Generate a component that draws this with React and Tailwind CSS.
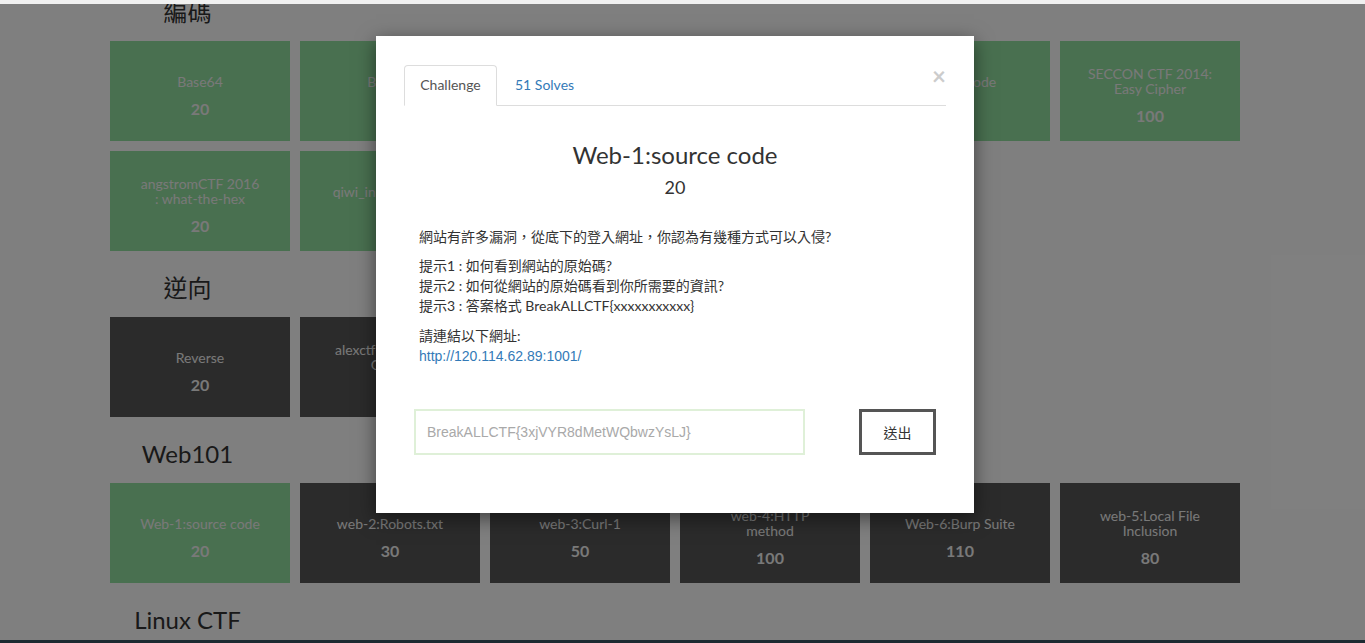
import React from "react";

const sections = [
  {
    title: "編碼",
    rows: [
      [
        { lines: ["Base64"], points: 20, solved: true },
        { lines: ["Base32"], points: 20, solved: true },
        { lines: ["URL Encode"], points: 20, solved: true },
        { lines: ["Caesar Cipher"], points: 30, solved: true },
        { lines: ["Morse code"], points: 20, solved: true },
        { lines: ["SECCON CTF 2014:", "Easy Cipher"], points: 100, solved: true },
      ],
      [
        { lines: ["angstromCTF 2016", ": what-the-hex"], points: 20, solved: true },
        { lines: ["qiwi_infosec_2016"], points: 20, solved: true },
      ],
    ],
  },
  {
    title: "逆向",
    rows: [
      [
        { lines: ["Reverse"], points: 20 },
        { lines: ["alexctf-2017 RE1:", "Gifted"], points: 50 },
      ],
    ],
  },
  {
    title: "Web101",
    rows: [
      [
        { lines: ["Web-1:source code"], points: 20, solved: true },
        { lines: ["web-2:Robots.txt"], points: 30 },
        { lines: ["web-3:Curl-1"], points: 50 },
        { lines: ["web-4:HTTP", "method"], points: 100 },
        { lines: ["Web-6:Burp Suite"], points: 110 },
        { lines: ["web-5:Local File", "Inclusion"], points: 80 },
      ],
    ],
  },
  { title: "Linux CTF", rows: [] },
];

function ChallengeCard({ card }) {
  return (
    <div
      className={`w-[180px] h-[100px] flex flex-col items-center justify-center pt-[10px] text-[#f2f2f2] text-center ${
        card.solved ? "bg-[#92e0a0]" : "bg-[#565656]"
      }`}
    >
      <div className="text-[14px] leading-[15px]">
        {card.lines.map((line) => (
          <div key={line}>{line}</div>
        ))}
      </div>
      <div className="mt-[10px] text-[16px] leading-[20px] font-bold">{card.points}</div>
    </div>
  );
}

export default function App() {
  return (
    <div
      className="relative w-[1365px] h-[643px] overflow-hidden bg-white text-[#333]"
      style={{ fontFamily: 'Lato, "Noto Sans CJK TC", sans-serif' }}
    >
      <div className="pl-[110px] -mt-[25px]">
        {sections.map((section) => (
          <div key={section.title}>
            <h3 className="w-[155px] mt-[24px] mb-[16px] h-[26px] text-center text-[24px] leading-[26px] text-[#333]">
              {section.title}
            </h3>
            <div className="flex flex-col gap-[10px]">
              {section.rows.map((row, i) => (
                <div key={i} className="flex gap-[10px]">
                  {row.map((card) => (
                    <ChallengeCard key={card.lines.join(" ")} card={card} />
                  ))}
                </div>
              ))}
            </div>
          </div>
        ))}
      </div>

      {/* backdrop */}
      <div className="absolute inset-0 bg-black/50" />
      <div className="absolute top-0 left-0 right-0 h-[4px] bg-[#f0f0f0]" />
      <div className="absolute bottom-0 left-0 right-0 h-[3px] bg-[#1c2a31]" />

      {/* modal */}
      <div className="absolute left-[376px] top-[36px] w-[598px] h-[477px] bg-white shadow-[0_5px_18px_rgba(0,0,0,0.5)] pt-[29px] px-[28px]">
        <button className="absolute right-[28px] top-[28px] text-[24px] leading-none font-bold text-[#cccccc]">
          ×
        </button>

        <div className="flex h-[41px] border-b border-[#dddddd] text-[14px]">
          <div className="w-[93px] h-[41px] flex items-center justify-center pb-[2px] border border-[#dddddd] border-b-white rounded-t-[4px] bg-white text-[#555]">
            Challenge
          </div>
          <div className="h-[41px] flex items-center pb-[2px] px-[18px] text-[#337ab7]">51 Solves</div>
        </div>

        <div className="mt-[34px] text-center text-[24px] leading-[30px] text-[#333]">Web-1:source code</div>
        <div className="mt-[4px] text-center text-[18px] leading-[26px] text-[#333]">20</div>

        <div className="mt-[27px] px-[15px] text-[14px] leading-[20px] text-[#333]">
          <p className="mb-[9px]">網站有許多漏洞，從底下的登入網址，你認為有幾種方式可以入侵?</p>
          <p className="mb-[10px]">
            提示1 : 如何看到網站的原始碼?
            <br />
            提示2 : 如何從網站的原始碼看到你所需要的資訊?
            <br />
            提示3 : 答案格式 BreakALLCTF{"{"}xxxxxxxxxxx{"}"}
          </p>
          <p>
            請連結以下網址:
            <br />
            <a className="text-[#337ab7]" style={{ fontFamily: '"Liberation Sans", Arial, sans-serif' }}>
              http://120.114.62.89:1001/
            </a>
          </p>
        </div>

        <div className="mt-[43px] px-[10px] flex items-center justify-between">
          <input
            readOnly
            placeholder="BreakALLCTF{3xjVYR8dMetWQbwzYsLJ}"
            className="w-[391px] h-[46px] border-2 border-[#dff0d8] px-[11px] text-[14px] text-[#555] placeholder:text-[#a9a9a9] outline-none"
            style={{ fontFamily: '"Liberation Sans", Arial, sans-serif' }}
          />
          <button className="w-[77px] h-[46px] border-[3px] border-[#555] bg-white text-[14px] text-[#333]">
            送出
          </button>
        </div>
      </div>
    </div>
  );
}
